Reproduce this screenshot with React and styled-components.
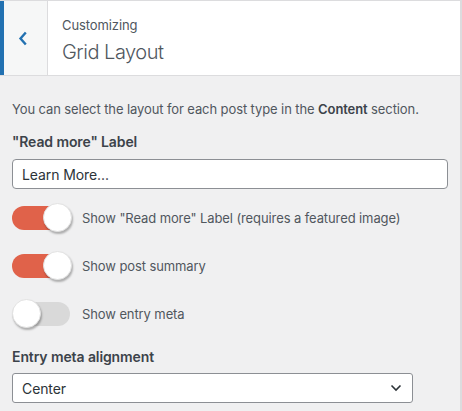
import React from 'react';
import styled, { createGlobalStyle } from 'styled-components';

const GlobalStyle = createGlobalStyle`
    body {
        margin: 0;
        background: #f0f0f1;
        font-family: Inter, 'Liberation Sans', Arial, sans-serif;
        letter-spacing: -0.1px;
        color: #50575e;
    }
`;

const Panel = styled.div`
    width: 460px;
    min-height: 411px;
    border-right: 2px solid #dcdcde;
    background: #f0f0f1;
`;

// Header
const Header = styled.div`
    display: flex;
    height: 74px;
    background: #fff;
    border-top: 1px solid #dcdcde;
    border-bottom: 1px solid #dcdcde;
`;

const BackButton = styled.button`
    width: 48px;
    flex-shrink: 0;
    display: flex;
    align-items: center;
    justify-content: center;
    padding: 0 5px 0 0;
    background: #f6f7f7;
    border: 0;
    border-left: 4px solid #2271b1;
    border-right: 1px solid #dcdcde;
    cursor: pointer;
`;

const TitleBlock = styled.div`
    display: flex;
    flex-direction: column;
    justify-content: center;
    padding: 4px 0 0 14px;
`;

const Crumb = styled.span`
    font-size: 13px;
    line-height: 18px;
    color: #50575e;
`;

const Title = styled.h3`
    margin: 5px 0 0;
    font-size: 20px;
    font-weight: 300;
    line-height: 26px;
    letter-spacing: -0.5px;
    color: #50575e;
`;

// Body
const Content = styled.div`
    display: flex;
    flex-direction: column;
    padding: 0 12px;
`;

const Description = styled.p`
    margin: 23px 0 13px;
    font-size: 13px;
    line-height: 20px;
    color: #50575e;
    strong {
        font-weight: 600;
        color: #3c434a;
    }
`;

const Label = styled.div`
    margin-top: ${({ $top }) => $top || 0}px;
    font-size: 14px;
    font-weight: 600;
    line-height: 20px;
    color: #3c434a;
`;

const TextInput = styled.input`
    box-sizing: border-box;
    width: 436px;
    height: 30px;
    margin-top: 7px;
    padding: 0 9px;
    border: 1px solid #8c8f94;
    border-radius: 4px;
    background: #fff;
    font-family: inherit;
    font-size: 14px;
    letter-spacing: inherit;
    color: #2c3338;
`;

const ToggleRow = styled.label`
    display: flex;
    align-items: center;
    gap: 12px;
    height: 32px;
    margin-top: ${({ $top }) => $top}px;
    font-size: 13px;
    color: #50575e;
`;

const Track = styled.span`
    position: relative;
    width: 58px;
    height: 24px;
    flex-shrink: 0;
    border-radius: 12px;
    background: ${({ $on }) => ($on ? '#e0624a' : '#d9d9d9')};
`;

const Knob = styled.span`
    position: absolute;
    top: -3px;
    left: ${({ $on }) => ($on ? 31 : 0)}px;
    width: 29px;
    height: 29px;
    box-sizing: border-box;
    border-radius: 50%;
    background: #fff;
    border: 1px solid #e2e2e2;
    box-shadow: 1px 2px 2px rgba(0, 0, 0, 0.28);
`;

const SelectBox = styled.div`
    box-sizing: border-box;
    display: flex;
    align-items: center;
    justify-content: space-between;
    width: 401px;
    height: 30px;
    margin-top: 6px;
    padding: 0 10px 0 9px;
    border: 1px solid #8c8f94;
    border-radius: 3px;
    background: #fff;
    font-size: 14px;
    color: #2c3338;
`;

const Toggle = ({ on, top, children }) => (
    <ToggleRow $top={top}>
        <Track $on={on}>
            <Knob $on={on} />
        </Track>
        {children}
    </ToggleRow>
);

const App = () => (
    <>
        <GlobalStyle />
        <Panel>
            <Header>
                <BackButton aria-label="Back">
                    <svg width="10" height="15" viewBox="0 0 10 15">
                        <path d="M7.8 1.5 L2.5 7.5 L7.8 13.5" fill="none" stroke="#2271b1" strokeWidth="2.4" />
                    </svg>
                </BackButton>
                <TitleBlock>
                    <Crumb>Customizing</Crumb>
                    <Title>Grid Layout</Title>
                </TitleBlock>
            </Header>
            <Content>
                <Description>
                    You can select the layout for each post type in the <strong>Content</strong> section.
                </Description>
                <Label>"Read more" Label</Label>
                <TextInput defaultValue="Learn More..." />
                <Toggle on top={13}>Show "Read more" Label (requires a featured image)</Toggle>
                <Toggle on top={16}>Show post summary</Toggle>
                <Toggle top={16}>Show entry meta</Toggle>
                <Label $top={17}>Entry meta alignment</Label>
                <SelectBox>
                    Center
                    <svg width="12" height="8" viewBox="0 0 12 8">
                        <path d="M1.5 1.5 L6 6 L10.5 1.5" fill="none" stroke="#2c3338" strokeWidth="1.6" />
                    </svg>
                </SelectBox>
            </Content>
        </Panel>
    </>
);

export default App;
